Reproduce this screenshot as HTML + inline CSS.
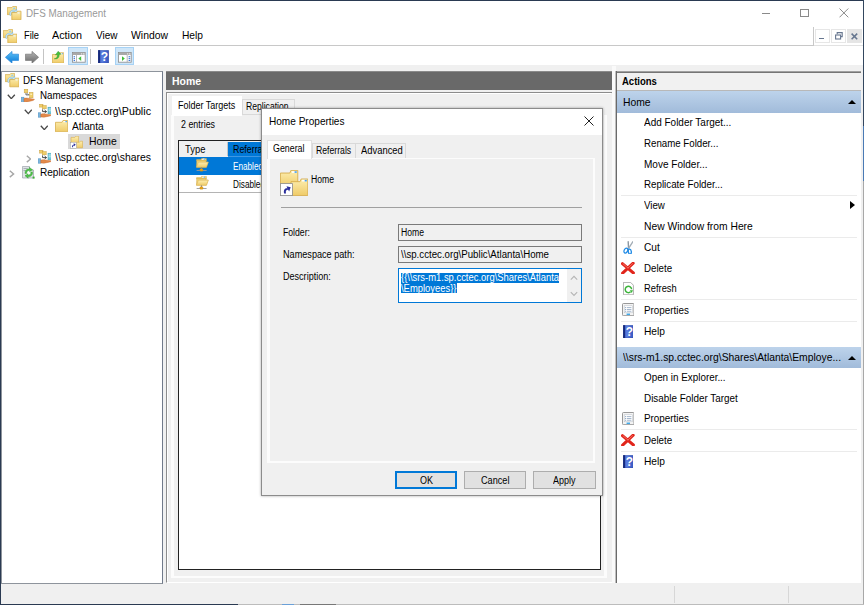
<!DOCTYPE html>
<html><head><meta charset="utf-8"><title>DFS Management</title>
<style>
html,body{margin:0;padding:0;}
body{width:864px;height:605px;overflow:hidden;position:relative;background:#fff;font-family:"Liberation Sans",sans-serif;}
div,span,svg{position:absolute;display:block;}
</style></head>
<body>
<div style="left:0px;top:0px;width:864px;height:605px;background:#fff;"></div>
<svg width="0" height="0" style="left:0;top:0"><defs><linearGradient id="fy" x1="0" y1="0" x2="0" y2="1"><stop offset="0" stop-color="#fdeeb0"/><stop offset="1" stop-color="#efcb68"/></linearGradient><linearGradient id="ab" x1="0" y1="0" x2="0" y2="1"><stop offset="0" stop-color="#5fc4f7"/><stop offset="1" stop-color="#0a79d8"/></linearGradient><linearGradient id="ag" x1="0" y1="0" x2="0" y2="1"><stop offset="0" stop-color="#b5b5b5"/><stop offset="1" stop-color="#6a6a6a"/></linearGradient><linearGradient id="hb" x1="0" y1="0" x2="1" y2="0"><stop offset="0" stop-color="#2443a8"/><stop offset="0.35" stop-color="#5b7fe0"/><stop offset="1" stop-color="#3555c0"/></linearGradient></defs></svg>
<div style="left:0px;top:65px;width:864px;height:520px;background:#f0f0f0;"></div>
<div style="left:0px;top:584px;width:864px;height:21px;background:#f0f0f0;"></div>
<div style="left:674px;top:586px;width:1px;height:17px;background:#d7d7d7;"></div>
<div style="left:788px;top:586px;width:1px;height:17px;background:#d7d7d7;"></div>
<div style="left:0px;top:45px;width:814px;height:1px;background:#c8c8c8;"></div>
<div style="left:813px;top:27px;width:1px;height:19px;background:#c8c8c8;"></div>
<div style="left:814px;top:45px;width:49px;height:1px;background:#e2e2e2;"></div>
<span class="t" style="left:26px;top:6.80px;height:14px;line-height:14px;font-size:10.4px;color:#999;font-weight:normal;white-space:pre;transform:scaleX(0.9487);transform-origin:0 0;">DFS Management</span>
<span class="t" style="left:23.5px;top:28.80px;height:14px;line-height:14px;font-size:10.4px;color:#000;font-weight:normal;white-space:pre;transform:scaleX(0.8955);transform-origin:0 0;">File</span>
<span class="t" style="left:52px;top:28.80px;height:14px;line-height:14px;font-size:10.4px;color:#000;font-weight:normal;white-space:pre;transform:scaleX(1.0384);transform-origin:0 0;">Action</span>
<span class="t" style="left:95.5px;top:28.80px;height:14px;line-height:14px;font-size:10.4px;color:#000;font-weight:normal;white-space:pre;transform:scaleX(0.9622);transform-origin:0 0;">View</span>
<span class="t" style="left:131px;top:28.80px;height:14px;line-height:14px;font-size:10.4px;color:#000;font-weight:normal;white-space:pre;transform:scaleX(1.0008);transform-origin:0 0;">Window</span>
<span class="t" style="left:182px;top:28.80px;height:14px;line-height:14px;font-size:10.4px;color:#000;font-weight:normal;white-space:pre;transform:scaleX(0.9825);transform-origin:0 0;">Help</span>
<svg style="left:7.4px;top:6px" width="14.4" height="14.4" viewBox="0 0 14.4 14.4"><path d="M0.20 1.63 L4.94 1.63 L5.94 0.30 L9.40 0.30 L9.40 8.60 L0.20 8.60 Z" fill="url(#fy)" stroke="#d6ad4c" stroke-width="0.8" stroke-linejoin="round"/><path d="M3 9.5 C1.5 6 5 3 8.5 4.5 L9.5 3 L10.5 7 L6.8 6.8 L7.8 5.6 C5.5 5 3.8 6.5 4.6 8.8 Z" fill="#cfe8f6" stroke="#6fb4dc" stroke-width="0.5"/><ellipse cx="7.2" cy="2.2" rx="1.2" ry="0.7" fill="#8ecdf0"/><path d="M4.80 6.58 L9.54 6.58 L10.54 5.20 L14.00 5.20 L14.00 13.80 L4.80 13.80 Z" fill="url(#fy)" stroke="#d6ad4c" stroke-width="0.8" stroke-linejoin="round"/><ellipse cx="11.6" cy="6.9" rx="1.1" ry="0.6" fill="#e9f4fb"/></svg>
<svg style="left:2.6px;top:29px" width="14.4" height="14.4" viewBox="0 0 14.4 14.4"><path d="M0.20 1.63 L4.94 1.63 L5.94 0.30 L9.40 0.30 L9.40 8.60 L0.20 8.60 Z" fill="url(#fy)" stroke="#d6ad4c" stroke-width="0.8" stroke-linejoin="round"/><path d="M3 9.5 C1.5 6 5 3 8.5 4.5 L9.5 3 L10.5 7 L6.8 6.8 L7.8 5.6 C5.5 5 3.8 6.5 4.6 8.8 Z" fill="#cfe8f6" stroke="#6fb4dc" stroke-width="0.5"/><ellipse cx="7.2" cy="2.2" rx="1.2" ry="0.7" fill="#8ecdf0"/><path d="M4.80 6.58 L9.54 6.58 L10.54 5.20 L14.00 5.20 L14.00 13.80 L4.80 13.80 Z" fill="url(#fy)" stroke="#d6ad4c" stroke-width="0.8" stroke-linejoin="round"/><ellipse cx="11.6" cy="6.9" rx="1.1" ry="0.6" fill="#e9f4fb"/></svg>
<div style="left:761.5px;top:13px;width:8.6px;height:1px;background:#8a8a8a;"></div>
<div style="left:800px;top:8.5px;width:8.6px;height:8.6px;border:1px solid #8a8a8a;box-sizing:border-box;"></div>
<svg style="left:839px;top:8px" width="10" height="10" viewBox="0 0 10 10"><path d="M0.5 0.5 L9.3 9.3 M9.3 0.5 L0.5 9.3" stroke="#8a8a8a" stroke-width="1" fill="none"/></svg>
<div style="left:815px;top:28.5px;width:14.5px;height:14.5px;background:#fff;border:1px solid #e6e6e6;box-sizing:border-box;"></div>
<div style="left:831px;top:28.5px;width:14.8px;height:14.5px;background:#fff;border:1px solid #e6e6e6;box-sizing:border-box;"></div>
<div style="left:847px;top:28.5px;width:15px;height:14.5px;background:#e5e5e5;"></div>
<div style="left:819px;top:37.5px;width:5px;height:1.6px;background:#66768f;"></div>
<svg style="left:835px;top:32px" width="8" height="8" viewBox="0 0 8 8"><path d="M2.2 2.2 V0.6 H7.2 V4.6 H5.6" fill="none" stroke="#66768f" stroke-width="1.1"/><rect x="0.6" y="3" width="5" height="4" fill="#fff" stroke="#66768f" stroke-width="1.1"/></svg>
<svg style="left:851px;top:33px" width="7" height="7" viewBox="0 0 7 7"><path d="M0.6 0.6 L6.2 6.2 M6.2 0.6 L0.6 6.2" stroke="#66768f" stroke-width="1.5" fill="none"/></svg>
<svg style="left:5px;top:50.5px" width="14" height="12.6" viewBox="0 0 14 12.6"><path d="M0.4 6.3 L7 0.4 L7 3.2 L13.6 3.2 L13.6 9.4 L7 9.4 L7 12.2 Z" fill="url(#ab)" stroke="#2a86d8" stroke-width="0.7" stroke-linejoin="round"/></svg>
<svg style="left:24.5px;top:50.5px" width="14" height="12.6" viewBox="0 0 14 12.6"><path d="M0.4 6.3 L7 0.4 L7 3.2 L13.6 3.2 L13.6 9.4 L7 9.4 L7 12.2 Z" fill="url(#ag)" stroke="#777" stroke-width="0.7" stroke-linejoin="round" transform="translate(14,0) scale(-1,1)"/></svg>
<div style="left:43px;top:49px;width:1.4px;height:14.6px;background:#c4c4c4;"></div>
<svg style="left:52px;top:50.6px" width="12.2" height="12.6" viewBox="0 0 12.2 12.6"><path d="M0.40 3.46 L6.41 3.46 L7.41 1.80 L11.80 1.80 L11.80 12.20 L0.40 12.20 Z" fill="url(#fy)" stroke="#d6ad4c" stroke-width="0.8" stroke-linejoin="round"/><rect x="8.4" y="2.3" width="2.6" height="0.9" fill="#fff"/><rect x="9.8" y="2.3" width="1.2" height="0.9" fill="#4aa0e8"/><path d="M2.2 7.8 C5 7.4 5.6 5.6 5.4 3.6 L3.4 4 L6.2 0.2 L9 3.2 L7.2 3.4 C7.4 6.4 5.6 8.4 2.2 7.8 Z" fill="#45c23c" stroke="#2a8e26" stroke-width="0.4"/></svg>
<div style="left:68px;top:47px;width:19.8px;height:17.8px;background:#cfe6f8;border:1px solid #a6d2f5;box-sizing:border-box;"></div>
<svg style="left:72px;top:52px" width="13.6" height="10.6" viewBox="0 0 13.6 10.6"><rect x="0.4" y="0.4" width="12.8" height="9.8" fill="#fff" stroke="#8a8a8a" stroke-width="0.8"/><rect x="0.8" y="0.8" width="12" height="2.2" fill="#a9a9a9"/><rect x="9" y="1.4" width="1.2" height="1" fill="#f4f4f4"/><rect x="11" y="1.4" width="1.2" height="1" fill="#f4f4f4"/><rect x="4.2" y="3" width="0.7" height="7" fill="#9a9a9a"/><rect x="1.6" y="4.2" width="1.4" height="1.1" fill="#3b78d8"/><rect x="1.6" y="6.1" width="1.4" height="1.1" fill="#3b78d8"/><rect x="1.6" y="8" width="1.4" height="1.1" fill="#3b78d8"/><path d="M6.4 6.6 L9.2 4.2 L9.2 9 Z" fill="#3fbe3a"/></svg>
<div style="left:89.5px;top:49px;width:1.4px;height:14.6px;background:#c4c4c4;"></div>
<svg style="left:98px;top:49.6px" width="11" height="13.4" viewBox="0 0 11 13.4"><rect x="0.2" y="0.2" width="10.6" height="13.0" rx="0.6" fill="url(#hb)" stroke="#1a2f86" stroke-width="0.4"/><rect x="0.2" y="0.2" width="1.76" height="13.0" fill="#16297a"/><text x="6.38" y="11.26" font-family="Liberation Sans" font-weight="bold" font-size="12.06" text-anchor="middle" fill="#fff">?</text></svg>
<div style="left:114.6px;top:47px;width:19.4px;height:17.8px;background:#cfe6f8;border:1px solid #a6d2f5;box-sizing:border-box;"></div>
<svg style="left:118.2px;top:52px" width="13.6" height="10.6" viewBox="0 0 13.6 10.6"><rect x="0.4" y="0.4" width="12.8" height="9.8" fill="#fff" stroke="#8a8a8a" stroke-width="0.8"/><rect x="0.8" y="0.8" width="12" height="2.2" fill="#a9a9a9"/><rect x="9" y="1.4" width="1.2" height="1" fill="#f4f4f4"/><rect x="11" y="1.4" width="1.2" height="1" fill="#f4f4f4"/><rect x="8.8" y="3" width="0.7" height="7" fill="#9a9a9a"/><rect x="10.6" y="4.2" width="1.6" height="1.1" fill="#3b78d8"/><rect x="10.6" y="6.1" width="1.6" height="1.1" fill="#3b78d8"/><rect x="10.6" y="8" width="1.6" height="1.1" fill="#3b78d8"/><path d="M6.8 6.6 L4 4.2 L4 9 Z" fill="#3fbe3a"/></svg>
<div style="left:1px;top:71px;width:162px;height:513px;background:#fff;border:1px solid #8e949c;box-sizing:border-box;border-right-color:#707a8a;"></div>
<div style="left:68px;top:134px;width:51.5px;height:15px;background:#d9d9d9;"></div>
<span class="t" style="left:23px;top:73.80px;height:14px;line-height:14px;font-size:10.4px;color:#000;font-weight:normal;white-space:pre;transform:scaleX(0.9487);transform-origin:0 0;">DFS Management</span>
<span class="t" style="left:39.5px;top:88.80px;height:14px;line-height:14px;font-size:10.4px;color:#000;font-weight:normal;white-space:pre;transform:scaleX(0.9400);transform-origin:0 0;">Namespaces</span>
<span class="t" style="left:55px;top:104.80px;height:14px;line-height:14px;font-size:10.4px;color:#000;font-weight:normal;white-space:pre;transform:scaleX(1.0324);transform-origin:0 0;">\\sp.cctec.org\Public</span>
<span class="t" style="left:72px;top:119.80px;height:14px;line-height:14px;font-size:10.4px;color:#000;font-weight:normal;white-space:pre;transform:scaleX(0.9796);transform-origin:0 0;">Atlanta</span>
<span class="t" style="left:88.5px;top:134.80px;height:14px;line-height:14px;font-size:10.4px;color:#000;font-weight:normal;white-space:pre;transform:scaleX(0.9993);transform-origin:0 0;">Home</span>
<span class="t" style="left:55px;top:150.80px;height:14px;line-height:14px;font-size:10.4px;color:#000;font-weight:normal;white-space:pre;transform:scaleX(1.0013);transform-origin:0 0;">\\sp.cctec.org\shares</span>
<span class="t" style="left:39.5px;top:165.80px;height:14px;line-height:14px;font-size:10.4px;color:#000;font-weight:normal;white-space:pre;transform:scaleX(0.9668);transform-origin:0 0;">Replication</span>
<svg style="left:4.6px;top:73.3px" width="14.4" height="14.4" viewBox="0 0 14.4 14.4"><path d="M0.20 1.63 L4.94 1.63 L5.94 0.30 L9.40 0.30 L9.40 8.60 L0.20 8.60 Z" fill="url(#fy)" stroke="#d6ad4c" stroke-width="0.8" stroke-linejoin="round"/><path d="M3 9.5 C1.5 6 5 3 8.5 4.5 L9.5 3 L10.5 7 L6.8 6.8 L7.8 5.6 C5.5 5 3.8 6.5 4.6 8.8 Z" fill="#cfe8f6" stroke="#6fb4dc" stroke-width="0.5"/><ellipse cx="7.2" cy="2.2" rx="1.2" ry="0.7" fill="#8ecdf0"/><path d="M4.80 6.58 L9.54 6.58 L10.54 5.20 L14.00 5.20 L14.00 13.80 L4.80 13.80 Z" fill="url(#fy)" stroke="#d6ad4c" stroke-width="0.8" stroke-linejoin="round"/><ellipse cx="11.6" cy="6.9" rx="1.1" ry="0.6" fill="#e9f4fb"/></svg>
<svg style="left:7.3px;top:93.6px" width="8.6" height="5.4" viewBox="-0.5 -0.5 8.6 5.4"><path d="M0.3 0.3 L3.80 4.10 L7.30 0.3" fill="none" stroke="#484848" stroke-width="1.35"/></svg>
<svg style="left:21.2px;top:89px" width="13.6" height="13.4" viewBox="0 0 13.6 13.4"><rect x="3.2" y="0.2" width="3.6" height="3.6" fill="#f0cf6a" stroke="#c9a040" stroke-width="0.5"/><rect x="8.4" y="3.4" width="3.6" height="5.4" fill="#f0cf6a" stroke="#c9a040" stroke-width="0.5"/><rect x="9.3" y="4.6" width="1.8" height="1.4" fill="#fbeeb8"/><path d="M5 4 L5 6 L8.2 6 M6.2 4.6 L7.6 6 L6.2 7.2" fill="none" stroke="#333" stroke-width="0.7"/><rect x="5.6" y="6.4" width="2.6" height="2" fill="#fff" opacity="0.85"/><rect x="0" y="8.2" width="3" height="5" fill="#7fb6dc" stroke="#4f8fc0" stroke-width="0.5"/><path d="M3 9.6 C5 8.6 7 9.2 9 9.6 L13.4 10.2 C13.6 11 12 11.6 10 12 L6 13 L3 12.8 Z" fill="#e38a4a" stroke="#c0642a" stroke-width="0.4"/></svg>
<svg style="left:23.8px;top:109.2px" width="8.6" height="5.4" viewBox="-0.5 -0.5 8.6 5.4"><path d="M0.3 0.3 L3.80 4.10 L7.30 0.3" fill="none" stroke="#484848" stroke-width="1.35"/></svg>
<svg style="left:37.5px;top:104.3px" width="13.6" height="13.4" viewBox="0 0 13.6 13.4"><rect x="1.6" y="0.3" width="3.4" height="2.8" fill="#f0cf6a" stroke="#c9a040" stroke-width="0.5"/><rect x="4.4" y="1.6" width="3.8" height="3.2" fill="#f0cf6a" stroke="#c9a040" stroke-width="0.5"/><path d="M4.6 5.4 L4.6 7.6 L8.6 7.6 M6.6 6 L8.4 7.6 L6.6 9" fill="none" stroke="#222" stroke-width="0.8"/><rect x="10" y="3.2" width="3.4" height="6.6" fill="#6cc6d8" stroke="#3a9db5" stroke-width="0.5"/><rect x="10.6" y="4.6" width="2.2" height="0.8" fill="#e4f6fa"/><rect x="10.6" y="6.4" width="2.2" height="0.8" fill="#e4f6fa"/><rect x="0" y="8.8" width="2.8" height="4.4" fill="#7fb6dc" stroke="#4f8fc0" stroke-width="0.5"/><path d="M2.8 10.2 C5 9.4 7 9.8 9 10.2 L13.2 10.8 C13.4 11.6 12 12 10 12.4 L6 13.2 L2.8 13 Z" fill="#e38a4a" stroke="#c0642a" stroke-width="0.4"/></svg>
<svg style="left:39.8px;top:124.6px" width="8.6" height="5.4" viewBox="-0.5 -0.5 8.6 5.4"><path d="M0.3 0.3 L3.80 4.10 L7.30 0.3" fill="none" stroke="#484848" stroke-width="1.35"/></svg>
<svg style="left:54.5px;top:119.8px" width="13.2" height="12.3" viewBox="-0.5 -0.5 13.2 12.3"><path d="M0.00 1.81 L6.48 1.81 L7.48 0.00 L12.20 0.00 L12.20 11.30 L0.00 11.30 Z" fill="url(#fy)" stroke="#d6ad4c" stroke-width="0.8" stroke-linejoin="round"/><rect x="8.05" y="0.57" width="3.42" height="1.13" fill="#fff"/><rect x="9.93" y="0.57" width="1.54" height="1.13" fill="#4aa0e8"/></svg>
<svg style="left:70px;top:135.8px" width="13" height="13" viewBox="0 0 13 13"><path d="M1.00 1.40 L4.81 1.40 L5.81 0.20 L8.60 0.20 L8.60 7.70 L1.00 7.70 Z" fill="url(#fy)" stroke="#d6ad4c" stroke-width="0.6" stroke-linejoin="round"/><path d="M6.40 6.26 L9.40 6.26 L10.40 5.20 L12.60 5.20 L12.60 11.80 L6.40 11.80 Z" fill="url(#fy)" stroke="#d6ad4c" stroke-width="0.6" stroke-linejoin="round"/><rect x="0.3" y="6.2" width="6.2" height="6.2" fill="#fff" stroke="#8f8f8f" stroke-width="0.43"/><path d="M2.16 11.28 C1.66 9.30 2.78 8.43 3.90 8.68 L3.40 7.56 L5.57 8.06 L4.76 10.29 L4.27 9.42 C3.40 9.30 2.78 9.92 3.15 11.28 Z" fill="#2b2f9c"/></svg>
<svg style="left:25.6px;top:155px" width="5.4" height="7.9" viewBox="-0.5 -0.5 5.4 7.9"><path d="M0.3 0.3 L4.10 3.45 L0.3 6.60" fill="none" stroke="#a6a6a6" stroke-width="1.4"/></svg>
<svg style="left:37.5px;top:150.2px" width="13.6" height="13.4" viewBox="0 0 13.6 13.4"><rect x="1.6" y="0.3" width="3.4" height="2.8" fill="#f0cf6a" stroke="#c9a040" stroke-width="0.5"/><rect x="4.4" y="1.6" width="3.8" height="3.2" fill="#f0cf6a" stroke="#c9a040" stroke-width="0.5"/><path d="M4.6 5.4 L4.6 7.6 L8.6 7.6 M6.6 6 L8.4 7.6 L6.6 9" fill="none" stroke="#222" stroke-width="0.8"/><rect x="10" y="3.2" width="3.4" height="6.6" fill="#6cc6d8" stroke="#3a9db5" stroke-width="0.5"/><rect x="10.6" y="4.6" width="2.2" height="0.8" fill="#e4f6fa"/><rect x="10.6" y="6.4" width="2.2" height="0.8" fill="#e4f6fa"/><rect x="0" y="8.8" width="2.8" height="4.4" fill="#7fb6dc" stroke="#4f8fc0" stroke-width="0.5"/><path d="M2.8 10.2 C5 9.4 7 9.8 9 10.2 L13.2 10.8 C13.4 11.6 12 12 10 12.4 L6 13.2 L2.8 13 Z" fill="#e38a4a" stroke="#c0642a" stroke-width="0.4"/></svg>
<svg style="left:9.2px;top:170.4px" width="5.4" height="7.9" viewBox="-0.5 -0.5 5.4 7.9"><path d="M0.3 0.3 L4.10 3.45 L0.3 6.60" fill="none" stroke="#a6a6a6" stroke-width="1.4"/></svg>
<svg style="left:21.6px;top:165.6px" width="13" height="13" viewBox="0 0 13 13"><path d="M0.5 0.5 L7.5 0.5 L7.5 4 L11.5 4 L11.5 12 L0.5 12 Z" fill="#dfe3e6" stroke="#8e979e" stroke-width="0.6"/><rect x="1.5" y="2" width="4" height="0.8" fill="#9aa4ab"/><rect x="1.5" y="4" width="4" height="0.8" fill="#9aa4ab"/><circle cx="6.8" cy="6.6" r="3.6" fill="#fff" opacity="0.9"/><path d="M3.2 7.8 C2.4 4.6 5 2.4 7.6 3 L7.4 1.4 L10.6 3.8 L7.6 5.8 L7.7 4.6 C6 4.2 4.4 5.6 4.8 7.6 Z" fill="#4fc24a" stroke="#2b8f2a" stroke-width="0.4"/><path d="M10.4 5.8 C11.2 9 8.6 11.2 6 10.6 L6.2 12.2 L3 9.8 L6 7.8 L5.9 9 C7.6 9.4 9.2 8 8.8 6 Z" fill="#4fc24a" stroke="#2b8f2a" stroke-width="0.4"/><rect x="10.6" y="10.6" width="2" height="2" fill="#3fae3a"/></svg>
<div style="left:166px;top:71px;width:446px;height:19px;background:#696969;"></div>
<div style="left:166px;top:71px;width:446px;height:1px;background:#8a8a8a;"></div>
<div style="left:166px;top:92px;width:447px;height:491px;background:#f0f0f0;box-sizing:border-box;border-top:1px solid #8c8c8c;border-left:1px solid #8c8c8c;border-right:1px solid #fff;border-bottom:1px solid #fff;"></div>
<div style="left:167px;top:93px;width:444px;height:1px;background:#fff;"></div>
<div style="left:167px;top:93px;width:1px;height:488px;background:#fff;"></div>
<span class="t" style="left:172px;top:74.80px;height:14px;line-height:14px;font-size:10.4px;color:#fff;font-weight:bold;white-space:pre;transform:scaleX(1.0043);transform-origin:0 0;">Home</span>
<div style="left:171px;top:115px;width:436px;height:463px;background:#fcfcfc;"></div>
<div style="left:174.4px;top:115.4px;width:430.1px;height:460.2px;background:#f0f0f0;"></div>
<div style="left:172px;top:96px;width:70px;height:20px;background:#fff;"></div>
<div style="left:242px;top:99px;width:53px;height:16px;background:#f0f0f0;border:1px solid #d9d9d9;box-sizing:border-box;"></div>
<span class="t" style="left:178px;top:98.80px;height:14px;line-height:14px;font-size:10.41px;color:#000;font-weight:normal;white-space:pre;transform:scaleX(0.8639);transform-origin:0 0;">Folder Targets</span>
<span class="t" style="left:246.4px;top:99.80px;height:14px;line-height:14px;font-size:10.41px;color:#000;font-weight:normal;white-space:pre;transform:scaleX(0.8274);transform-origin:0 0;">Replication</span>
<span class="t" style="left:181px;top:117.80px;height:14px;line-height:14px;font-size:10.41px;color:#000;font-weight:normal;white-space:pre;transform:scaleX(0.8517);transform-origin:0 0;">2 entries</span>
<div style="left:178px;top:140px;width:423px;height:430px;background:#fff;border:1px solid #222;box-sizing:border-box;"></div>
<div style="left:179px;top:141px;width:421px;height:15.5px;background:#f0f0f0;"></div>
<div style="left:227px;top:142px;width:1px;height:14px;background:#c6c6c6;"></div>
<div style="left:228px;top:142px;width:40px;height:15px;background:#0078d7;"></div>
<span class="t" style="left:185.3px;top:142.80px;height:14px;line-height:14px;font-size:10.4px;color:#000;font-weight:normal;white-space:pre;transform:scaleX(0.9054);transform-origin:0 0;">Type</span>
<span class="t" style="left:232.5px;top:142.80px;height:14px;line-height:14px;font-size:10.4px;color:#000;font-weight:normal;white-space:pre;transform:scaleX(0.8521);transform-origin:0 0;">Referral</span>
<div style="left:179px;top:156.5px;width:90px;height:18.2px;background:#0078d7;"></div>
<div style="left:228px;top:156px;width:40px;height:1px;background:#3f97e2;"></div>
<span class="t" style="left:232.5px;top:159.80px;height:14px;line-height:14px;font-size:10.41px;color:#fff;font-weight:normal;white-space:pre;transform:scaleX(0.7853);transform-origin:0 0;">Enabled</span>
<span class="t" style="left:232.5px;top:177.80px;height:14px;line-height:14px;font-size:10.41px;color:#000;font-weight:normal;white-space:pre;transform:scaleX(0.7901);transform-origin:0 0;">Disabled</span>
<div style="left:179px;top:192px;width:421px;height:1px;background:#b4b4b4;"></div>
<svg style="left:196.2px;top:158px" width="12.6" height="13.6" viewBox="0 0 12.6 13.6"><path d="M0.6 1.6 L4.8 1.6 L5.6 0.4 L10.4 0.4 L10.4 3 L0.6 3 Z" fill="#f1d375" stroke="#d2a948" stroke-width="0.5"/><ellipse cx="7.6" cy="1.2" rx="1.5" ry="0.8" fill="#fff"/><ellipse cx="8.2" cy="1.2" rx="0.7" ry="0.6" fill="#4aa0e8"/><path d="M0.4 9.2 L0.8 2.6 L10 2.6 L10.2 4 L12.2 4 L10.4 9.2 Z" fill="#f1d375" stroke="#d2a948" stroke-width="0.5"/><path d="M0.5 9.3 L2.4 4.2 L12.3 4.2 L10.4 9.3 Z" fill="url(#fy)" stroke="#d9b255" stroke-width="0.5"/><rect x="5" y="9.3" width="0.9" height="2" fill="#8a8a8a"/><rect x="0.6" y="12" width="10" height="0.9" fill="#9a9a9a"/><rect x="4" y="10.8" width="2.9" height="2.4" rx="0.5" fill="#e8a317" stroke="#c07f0a" stroke-width="0.3"/></svg>
<svg style="left:196.2px;top:176px" width="12.6" height="13.6" viewBox="0 0 12.6 13.6"><path d="M0.6 1.6 L4.8 1.6 L5.6 0.4 L10.4 0.4 L10.4 3 L0.6 3 Z" fill="#f1d375" stroke="#d2a948" stroke-width="0.5"/><ellipse cx="7.6" cy="1.2" rx="1.5" ry="0.8" fill="#fff"/><ellipse cx="8.2" cy="1.2" rx="0.7" ry="0.6" fill="#4aa0e8"/><path d="M0.4 9.2 L0.8 2.6 L10 2.6 L10.2 4 L12.2 4 L10.4 9.2 Z" fill="#f1d375" stroke="#d2a948" stroke-width="0.5"/><path d="M0.5 9.3 L2.4 4.2 L12.3 4.2 L10.4 9.3 Z" fill="url(#fy)" stroke="#d9b255" stroke-width="0.5"/><rect x="5" y="9.3" width="0.9" height="2" fill="#8a8a8a"/><rect x="0.6" y="12" width="10" height="0.9" fill="#9a9a9a"/><rect x="4" y="10.8" width="2.9" height="2.4" rx="0.5" fill="#e8a317" stroke="#c07f0a" stroke-width="0.3"/></svg>
<div style="left:612px;top:66px;width:4px;height:517px;background:#fafafa;"></div>
<div style="left:615px;top:71px;width:246.4px;height:512px;background:#fff;"></div>
<div style="left:615px;top:71px;width:246.4px;height:1px;background:#a0a0a0;"></div>
<div style="left:615px;top:72px;width:246.4px;height:1px;background:#757575;"></div>
<div style="left:615px;top:71px;width:1px;height:512px;background:#c0c0c0;"></div>
<div style="left:616px;top:71px;width:1px;height:512px;background:#6a6a6a;"></div>
<div style="left:617px;top:73px;width:244.4px;height:17px;background:#f1f1f1;"></div>
<div style="left:617px;top:90px;width:244.4px;height:1px;background:#b8b8b8;"></div>
<span class="t" style="left:621.5px;top:74.80px;height:14px;line-height:14px;font-size:10.4px;color:#000;font-weight:bold;white-space:pre;transform:scaleX(0.9158);transform-origin:0 0;">Actions</span>
<div style="left:617px;top:91px;width:244.4px;height:21.5px;background:linear-gradient(#bdd3eb,#a1bbda);"></div>
<span class="t" style="left:623.4px;top:95.80px;height:14px;line-height:14px;font-size:10.4px;color:#000;font-weight:normal;white-space:pre;transform:scaleX(0.9957);transform-origin:0 0;">Home</span>
<div style="left:847.7px;top:100px;width:0;height:0;border-left:4px solid transparent;border-right:4px solid transparent;border-bottom:4px solid #000"></div>
<span class="t" style="left:643.8px;top:115.80px;height:14px;line-height:14px;font-size:10.4px;color:#000;font-weight:normal;white-space:pre;transform:scaleX(0.9596);transform-origin:0 0;">Add Folder Target...</span>
<span class="t" style="left:643.8px;top:136.80px;height:14px;line-height:14px;font-size:10.4px;color:#000;font-weight:normal;white-space:pre;transform:scaleX(0.9335);transform-origin:0 0;">Rename Folder...</span>
<span class="t" style="left:643.8px;top:157.80px;height:14px;line-height:14px;font-size:10.4px;color:#000;font-weight:normal;white-space:pre;transform:scaleX(0.9659);transform-origin:0 0;">Move Folder...</span>
<span class="t" style="left:643.8px;top:177.80px;height:14px;line-height:14px;font-size:10.4px;color:#000;font-weight:normal;white-space:pre;transform:scaleX(0.9409);transform-origin:0 0;">Replicate Folder...</span>
<span class="t" style="left:643.8px;top:198.80px;height:14px;line-height:14px;font-size:10.4px;color:#000;font-weight:normal;white-space:pre;transform:scaleX(0.9354);transform-origin:0 0;">View</span>
<span class="t" style="left:643.8px;top:219.80px;height:14px;line-height:14px;font-size:10.4px;color:#000;font-weight:normal;white-space:pre;transform:scaleX(0.9916);transform-origin:0 0;">New Window from Here</span>
<span class="t" style="left:643.8px;top:240.80px;height:14px;line-height:14px;font-size:10.4px;color:#000;font-weight:normal;white-space:pre;transform:scaleX(0.9770);transform-origin:0 0;">Cut</span>
<span class="t" style="left:643.8px;top:261.80px;height:14px;line-height:14px;font-size:10.4px;color:#000;font-weight:normal;white-space:pre;transform:scaleX(0.9352);transform-origin:0 0;">Delete</span>
<span class="t" style="left:643.8px;top:281.80px;height:14px;line-height:14px;font-size:10.4px;color:#000;font-weight:normal;white-space:pre;transform:scaleX(0.8986);transform-origin:0 0;">Refresh</span>
<span class="t" style="left:643.8px;top:303.80px;height:14px;line-height:14px;font-size:10.4px;color:#000;font-weight:normal;white-space:pre;transform:scaleX(0.9481);transform-origin:0 0;">Properties</span>
<span class="t" style="left:643.8px;top:324.80px;height:14px;line-height:14px;font-size:10.4px;color:#000;font-weight:normal;white-space:pre;transform:scaleX(0.9825);transform-origin:0 0;">Help</span>
<div style="left:621px;top:195px;width:236px;height:1px;background:#ebebeb;"></div>
<div style="left:621px;top:237px;width:236px;height:1px;background:#ebebeb;"></div>
<div style="left:621px;top:299px;width:236px;height:1px;background:#ebebeb;"></div>
<div style="left:621px;top:320.5px;width:236px;height:1px;background:#ebebeb;"></div>
<div style="left:850px;top:201.3px;width:0;height:0;border-top:4.2px solid transparent;border-bottom:4.2px solid transparent;border-left:5px solid #000"></div>
<div style="left:617px;top:346.5px;width:244.4px;height:21.5px;background:linear-gradient(#bdd3eb,#a1bbda);"></div>
<span class="t" style="left:623px;top:350.80px;height:14px;line-height:14px;font-size:10.4px;color:#000;font-weight:normal;white-space:pre;transform:scaleX(0.9934);transform-origin:0 0;">\\srs-m1.sp.cctec.org\Shares\Atlanta\Employe...</span>
<div style="left:847.7px;top:355.5px;width:0;height:0;border-left:4px solid transparent;border-right:4px solid transparent;border-bottom:4px solid #000"></div>
<span class="t" style="left:643.8px;top:370.80px;height:14px;line-height:14px;font-size:10.4px;color:#000;font-weight:normal;white-space:pre;transform:scaleX(0.9481);transform-origin:0 0;">Open in Explorer...</span>
<span class="t" style="left:643.8px;top:391.80px;height:14px;line-height:14px;font-size:10.4px;color:#000;font-weight:normal;white-space:pre;transform:scaleX(0.9515);transform-origin:0 0;">Disable Folder Target</span>
<span class="t" style="left:643.8px;top:411.80px;height:14px;line-height:14px;font-size:10.4px;color:#000;font-weight:normal;white-space:pre;transform:scaleX(0.9481);transform-origin:0 0;">Properties</span>
<span class="t" style="left:643.8px;top:433.80px;height:14px;line-height:14px;font-size:10.4px;color:#000;font-weight:normal;white-space:pre;transform:scaleX(0.9352);transform-origin:0 0;">Delete</span>
<span class="t" style="left:643.8px;top:454.80px;height:14px;line-height:14px;font-size:10.4px;color:#000;font-weight:normal;white-space:pre;transform:scaleX(0.9825);transform-origin:0 0;">Help</span>
<div style="left:621px;top:429px;width:236px;height:1px;background:#ebebeb;"></div>
<div style="left:621px;top:450.5px;width:236px;height:1px;background:#ebebeb;"></div>
<svg style="left:622.8px;top:240.5px" width="10.4" height="13.8" viewBox="0 0 10.4 13.8"><path d="M5.2 0.8 L5.6 8.2" fill="none" stroke="#8c97a1" stroke-width="1.4" stroke-linecap="round"/><path d="M9.8 0.8 L4.6 8.8" fill="none" stroke="#a3adb6" stroke-width="1.4" stroke-linecap="round"/><ellipse cx="2.9" cy="9.6" rx="1.7" ry="2.6" fill="none" stroke="#1f8ae6" stroke-width="1.3" transform="rotate(28 2.9 9.6)"/><ellipse cx="6.8" cy="10.6" rx="1.5" ry="2.5" fill="none" stroke="#1f8ae6" stroke-width="1.3" transform="rotate(-8 6.8 10.6)"/></svg>
<svg style="left:621.2px;top:262px" width="13.8" height="12.4" viewBox="0 0 13.8 12.4"><path d="M1.4 1.6 L12.4 11 M12.2 1.2 L1.6 11.2" fill="none" stroke="#e1251b" stroke-width="3" stroke-linecap="round"/><path d="M2 1.8 L7 6 M11.6 1.6 L7 6" fill="none" stroke="#f36a5e" stroke-width="1" stroke-linecap="round"/></svg>
<svg style="left:623.2px;top:282.3px" width="10.8" height="13.2" viewBox="0 0 10.8 13.2"><path d="M0.4 0.4 L7.6 0.4 L10.4 3.2 L10.4 12.8 L0.4 12.8 Z" fill="#fff" stroke="#9a9a9a" stroke-width="0.8"/><path d="M8.6 7.2 A3.2 3.2 0 1 0 7.6 9.8" fill="none" stroke="#3cb43a" stroke-width="1.5"/><path d="M6.8 8.2 L10 8.2 L8.6 11 Z" fill="#3cb43a"/></svg>
<svg style="left:621.5px;top:303px" width="12.6" height="13.2" viewBox="0 0 12.6 13.2"><rect x="0.5" y="0.5" width="11.5" height="12.2" rx="1" fill="#f4f4f4" stroke="#8c8c8c" stroke-width="0.9"/><rect x="2.2" y="2.8" width="8.2" height="7" fill="#fff" stroke="#b5bcc4" stroke-width="0.5"/><rect x="3" y="4.2" width="1.2" height="0.9" fill="#8aa4c4"/><rect x="5" y="4.2" width="4.4" height="0.9" fill="#9db0c8"/><rect x="3" y="6" width="1.2" height="0.9" fill="#8aa4c4"/><rect x="5" y="6" width="4.4" height="0.9" fill="#9db0c8"/><rect x="3" y="7.8" width="1.2" height="0.9" fill="#8aa4c4"/><rect x="5" y="7.8" width="4.4" height="0.9" fill="#9db0c8"/><rect x="4.6" y="10.6" width="3.4" height="1.3" fill="#2aa1ea"/></svg>
<svg style="left:622.5px;top:324.6px" width="10.8" height="13.2" viewBox="0 0 10.8 13.2"><rect x="0.2" y="0.2" width="10.4" height="12.799999999999999" rx="0.6" fill="url(#hb)" stroke="#1a2f86" stroke-width="0.4"/><rect x="0.2" y="0.2" width="1.73" height="12.799999999999999" fill="#16297a"/><text x="6.26" y="11.09" font-family="Liberation Sans" font-weight="bold" font-size="11.88" text-anchor="middle" fill="#fff">?</text></svg>
<svg style="left:621.5px;top:412px" width="12.6" height="13.2" viewBox="0 0 12.6 13.2"><rect x="0.5" y="0.5" width="11.5" height="12.2" rx="1" fill="#f4f4f4" stroke="#8c8c8c" stroke-width="0.9"/><rect x="2.2" y="2.8" width="8.2" height="7" fill="#fff" stroke="#b5bcc4" stroke-width="0.5"/><rect x="3" y="4.2" width="1.2" height="0.9" fill="#8aa4c4"/><rect x="5" y="4.2" width="4.4" height="0.9" fill="#9db0c8"/><rect x="3" y="6" width="1.2" height="0.9" fill="#8aa4c4"/><rect x="5" y="6" width="4.4" height="0.9" fill="#9db0c8"/><rect x="3" y="7.8" width="1.2" height="0.9" fill="#8aa4c4"/><rect x="5" y="7.8" width="4.4" height="0.9" fill="#9db0c8"/><rect x="4.6" y="10.6" width="3.4" height="1.3" fill="#2aa1ea"/></svg>
<svg style="left:621.2px;top:434px" width="13.8" height="12.4" viewBox="0 0 13.8 12.4"><path d="M1.4 1.6 L12.4 11 M12.2 1.2 L1.6 11.2" fill="none" stroke="#e1251b" stroke-width="3" stroke-linecap="round"/><path d="M2 1.8 L7 6 M11.6 1.6 L7 6" fill="none" stroke="#f36a5e" stroke-width="1" stroke-linecap="round"/></svg>
<svg style="left:622.5px;top:454.8px" width="10.8" height="13.2" viewBox="0 0 10.8 13.2"><rect x="0.2" y="0.2" width="10.4" height="12.799999999999999" rx="0.6" fill="url(#hb)" stroke="#1a2f86" stroke-width="0.4"/><rect x="0.2" y="0.2" width="1.73" height="12.799999999999999" fill="#16297a"/><text x="6.26" y="11.09" font-family="Liberation Sans" font-weight="bold" font-size="11.88" text-anchor="middle" fill="#fff">?</text></svg>
<div style="left:261px;top:108px;width:342px;height:388px;background:#f0f0f0;border:1px solid #8c8c8c;box-sizing:border-box;box-shadow:0 0 2.5px rgba(0,0,0,.35);"></div>
<div style="left:262px;top:109px;width:340px;height:25.5px;background:#fff;"></div>
<span class="t" style="left:268.8px;top:114.80px;height:14px;line-height:14px;font-size:10.4px;color:#000;font-weight:normal;white-space:pre;transform:scaleX(0.9683);transform-origin:0 0;">Home Properties</span>
<svg style="left:584px;top:116px" width="10" height="10" viewBox="0 0 10 10"><path d="M0.5 0.5 L9.5 9.5 M9.5 0.5 L0.5 9.5" stroke="#222" stroke-width="1" fill="none"/></svg>
<div style="left:267px;top:157.6px;width:327.6px;height:305.8px;background:#fcfcfc;"></div>
<div style="left:270.2px;top:159.2px;width:322.4px;height:301.6px;background:#f0f0f0;"></div>
<div style="left:267px;top:140.4px;width:44.6px;height:19px;background:#fff;border:1px solid #e0e0e0;box-sizing:border-box;border-bottom:none;"></div>
<div style="left:311.7px;top:142.5px;width:44.3px;height:15px;background:#f0f0f0;border:1px solid #d9d9d9;box-sizing:border-box;border-bottom:none;"></div>
<div style="left:355px;top:142.5px;width:51.3px;height:15px;background:#f0f0f0;border:1px solid #d9d9d9;box-sizing:border-box;border-bottom:none;"></div>
<span class="t" style="left:273px;top:141.80px;height:14px;line-height:14px;font-size:10.41px;color:#000;font-weight:normal;white-space:pre;transform:scaleX(0.8506);transform-origin:0 0;">General</span>
<span class="t" style="left:315.5px;top:143.80px;height:14px;line-height:14px;font-size:10.41px;color:#000;font-weight:normal;white-space:pre;transform:scaleX(0.8338);transform-origin:0 0;">Referrals</span>
<span class="t" style="left:361.2px;top:143.80px;height:14px;line-height:14px;font-size:10.41px;color:#000;font-weight:normal;white-space:pre;transform:scaleX(0.9029);transform-origin:0 0;">Advanced</span>
<svg style="left:280px;top:169.8px" width="28.4" height="26.4" viewBox="0 0 28.4 26.4"><path d="M0.40 3.04 L9.89 3.04 L10.89 0.40 L17.80 0.40 L17.80 16.90 L0.40 16.90 Z" fill="url(#fy)" stroke="#d6ad4c" stroke-width="0.9" stroke-linejoin="round"/><rect x="11.88" y="1.23" width="4.87" height="1.65" fill="#fff"/><rect x="14.56" y="1.23" width="2.19" height="1.65" fill="#4aa0e8"/><path d="M11.00 11.66 L20.14 11.66 L21.14 9.00 L27.80 9.00 L27.80 25.60 L11.00 25.60 Z" fill="url(#fy)" stroke="#d6ad4c" stroke-width="0.9" stroke-linejoin="round"/><rect x="22.09" y="9.83" width="4.70" height="1.66" fill="#fff"/><rect x="24.68" y="9.83" width="2.12" height="1.66" fill="#4aa0e8"/><rect x="0.5" y="13.6" width="12" height="12" fill="#fff" stroke="#8f8f8f" stroke-width="0.84"/><path d="M4.10 23.44 C3.14 19.60 5.30 17.92 7.46 18.40 L6.50 16.24 L10.70 17.20 L9.14 21.52 L8.18 19.84 C6.50 19.60 5.30 20.80 6.02 23.44 Z" fill="#2b2f9c"/></svg>
<span class="t" style="left:311.3px;top:172.80px;height:14px;line-height:14px;font-size:10.41px;color:#000;font-weight:normal;white-space:pre;transform:scaleX(0.8284);transform-origin:0 0;">Home</span>
<div style="left:280.5px;top:207px;width:301.5px;height:1px;background:#a0a0a0;"></div>
<span class="t" style="left:283px;top:225.80px;height:14px;line-height:14px;font-size:10.41px;color:#000;font-weight:normal;white-space:pre;transform:scaleX(0.8336);transform-origin:0 0;">Folder:</span>
<span class="t" style="left:283px;top:247.80px;height:14px;line-height:14px;font-size:10.41px;color:#000;font-weight:normal;white-space:pre;transform:scaleX(0.8765);transform-origin:0 0;">Namespace path:</span>
<span class="t" style="left:283px;top:269.80px;height:14px;line-height:14px;font-size:10.41px;color:#000;font-weight:normal;white-space:pre;transform:scaleX(0.8698);transform-origin:0 0;">Description:</span>
<div style="left:398px;top:224px;width:184px;height:16.5px;background:#f0f0f0;border:1px solid #7a7a7a;box-sizing:border-box;"></div>
<div style="left:398px;top:246px;width:184px;height:16.5px;background:#f0f0f0;border:1px solid #7a7a7a;box-sizing:border-box;"></div>
<div style="left:398px;top:268px;width:184px;height:34.5px;background:#fff;border:1px solid #0078d7;box-sizing:border-box;"></div>
<div style="left:567px;top:269px;width:14px;height:32.5px;background:#f0f0f0;"></div>
<svg style="left:569.5px;top:275px" width="8" height="6" viewBox="0 0 8 6"><path d="M0.8 4.6 L4 1.4 L7.2 4.6" fill="none" stroke="#b4b4b4" stroke-width="1.1"/></svg>
<svg style="left:569.5px;top:291px" width="8" height="6" viewBox="0 0 8 6"><path d="M0.8 1.2 L4 4.4 L7.2 1.2" fill="none" stroke="#b4b4b4" stroke-width="1.1"/></svg>
<span class="t" style="left:401px;top:225.80px;height:14px;line-height:14px;font-size:10.41px;color:#000;font-weight:normal;white-space:pre;transform:scaleX(0.8284);transform-origin:0 0;">Home</span>
<span class="t" style="left:401px;top:247.80px;height:14px;line-height:14px;font-size:10.41px;color:#000;font-weight:normal;white-space:pre;transform:scaleX(0.9305);transform-origin:0 0;">\\sp.cctec.org\Public\Atlanta\Home</span>
<div style="left:400.7px;top:272.5px;width:158.8px;height:10px;background:#0078d7;"></div>
<div style="left:400.7px;top:282.5px;width:56px;height:10px;background:#0078d7;"></div>
<span class="t" style="left:401px;top:270.80px;height:14px;line-height:14px;font-size:10.41px;color:#fff;font-weight:normal;white-space:pre;transform:scaleX(0.9046);transform-origin:0 0;">{{\\srs-m1.sp.cctec.org\Shares\Atlanta</span>
<span class="t" style="left:401px;top:281.80px;height:14px;line-height:14px;font-size:10.41px;color:#fff;font-weight:normal;white-space:pre;transform:scaleX(0.9050);transform-origin:0 0;">\Employees}}</span>
<div style="left:395px;top:471px;width:62.2px;height:17.5px;background:#e1e1e1;border:2px solid #0078d7;box-sizing:border-box;"></div>
<div style="left:464px;top:471px;width:62.2px;height:17.5px;background:#e1e1e1;border:1px solid #adadad;box-sizing:border-box;"></div>
<div style="left:533.3px;top:471px;width:62.6px;height:17.5px;background:#e1e1e1;border:1px solid #adadad;box-sizing:border-box;"></div>
<span class="t" style="left:419.5px;top:473.80px;height:14px;line-height:14px;font-size:10.41px;color:#000;font-weight:normal;white-space:pre;transform:scaleX(0.8640);transform-origin:0 0;">OK</span>
<span class="t" style="left:481px;top:473.80px;height:14px;line-height:14px;font-size:10.41px;color:#000;font-weight:normal;white-space:pre;transform:scaleX(0.8795);transform-origin:0 0;">Cancel</span>
<span class="t" style="left:553px;top:473.80px;height:14px;line-height:14px;font-size:10.41px;color:#000;font-weight:normal;white-space:pre;transform:scaleX(0.8643);transform-origin:0 0;">Apply</span>
<div style="left:0px;top:0px;width:864px;height:1px;background:#2a3a52;"></div>
<div style="left:0px;top:0px;width:1px;height:605px;background:#2a3a52;"></div>
<div style="left:863px;top:0px;width:1px;height:126px;background:#34475f;"></div>
<div style="left:863px;top:126px;width:1px;height:55px;background:#4a7ab5;"></div>
<div style="left:863px;top:181px;width:1px;height:424px;background:#a8a8a8;"></div>
<div style="left:0px;top:604px;width:238px;height:1px;background:#2a3a52;"></div>
<div style="left:238px;top:604px;width:626px;height:1px;background:#bcbcbc;"></div>
<div style="left:282px;top:604px;width:12px;height:1px;background:#6aa0d8;"></div>
<div style="left:300px;top:604px;width:36px;height:1px;background:#777;"></div>
</body></html>
